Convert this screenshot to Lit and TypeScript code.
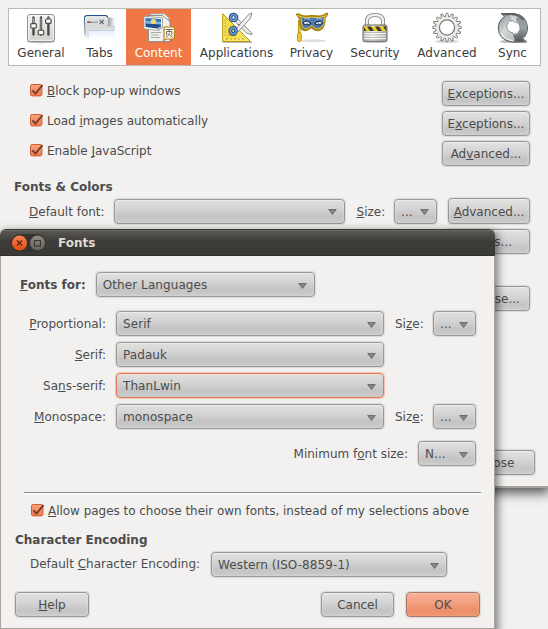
import { LitElement, html, css, svg, nothing } from "lit";
import { customElement, property } from "lit/decorators.js";
import { classMap } from "lit/directives/class-map.js";

/** Splits a label such as "Si_ze:" into text with an underlined access key. */
function mnemonic(label: string) {
  const i = label.indexOf("_");
  if (i < 0) return html`${label}`;
  return html`${label.slice(0, i)}<span class="key">${label[i + 1]}</span>${label.slice(i + 2)}`;
}

const keyStyle = css`
  .key {
    text-decoration: underline;
    text-decoration-thickness: 1px;
    text-underline-offset: 1px;
    text-decoration-skip-ink: none;
  }
`;

@customElement("ui-label")
class UiLabel extends LitElement {
  @property() text = "";
  static styles = [keyStyle, css`:host { display: block; white-space: pre; line-height: 15px; padding-top: 2px; }`];
  render() { return mnemonic(this.text); }
}

@customElement("ui-button")
class UiButton extends LitElement {
  @property() text = "";
  @property({ type: Boolean }) primary = false;
  static styles = [keyStyle, css`
    :host { display: block; flex: none; height: 25px; }
    .face {
      box-sizing: border-box; width: 100%; height: 100%; padding-top: 2px;
      display: flex; align-items: center; justify-content: center;
      border: 1px solid #999896; border-radius: 4px; white-space: pre;
      background: linear-gradient(#e2e2e1, #d3d3d3 45%, #c5c5c5 75%, #cacaca);
      box-shadow: inset 0 1px 0 #ececec, inset 0 0 3px rgba(255,255,255,.4), 0 0 1px 0.5px rgba(0,0,0,.1);
    }
    .primary {
      border-color: #a4796a;
      background: linear-gradient(#f9b196, #f39e7e 45%, #ec8e69 75%, #ef9572);
      box-shadow: inset 0 1px 0 #fbbda5, inset 0 0 3px rgba(255,190,160,.5), 0 0 1px 0.5px rgba(0,0,0,.1);
    }
    .text { line-height: 15px; }
  `];
  render() {
    return html`<div class=${classMap({ face: true, primary: this.primary })}><span class="text">${mnemonic(this.text)}</span></div>`;
  }
}

@customElement("ui-select")
class UiSelect extends LitElement {
  @property() value = "";
  @property({ type: Boolean }) focused = false;
  static styles = css`
    :host { display: block; flex: none; height: 25px; }
    .face {
      box-sizing: border-box; width: 100%; height: 100%;
      display: flex; align-items: center; justify-content: space-between;
      padding: 2px 7px 0 6px;
      border: 1px solid #999896; border-radius: 4px; white-space: pre;
      background: linear-gradient(#e0e0df, #d3d3d3 40%, #c4c4c4 72%, #cacaca);
      box-shadow: inset 0 1px 0 #ececec, inset 0 0 3px rgba(255,255,255,.4), 0 0 1px 0.5px rgba(0,0,0,.1);
    }
    .focused { border-color: #e27b57; box-shadow: inset 0 1px 0 #f0dfd8, 0 0 0 1px rgba(240,140,105,.45); }
    .text { line-height: 15px; letter-spacing: .08px; }
    .arrow { display: block; width: 9px; height: 6px; }
  `;
  render() {
    return html`<div class=${classMap({ face: true, focused: this.focused })}>
      <span class="text">${this.value}</span>
      <svg class="arrow" viewBox="0 0 9 6"><path d="M.7.5h7.6L4.5 5.5z" fill="#858585" stroke="#686868" stroke-width=".9"/></svg>
    </div>`;
  }
}

@customElement("ui-check")
class UiCheck extends LitElement {
  @property() text = "";
  static styles = [keyStyle, css`
    :host { display: flex; align-items: flex-start; height: 16px; gap: 3px; white-space: pre; line-height: 15px; letter-spacing: -.03px; }
    .box { display: block; flex: none; width: 15px; height: 15px; }
    .text { padding-top: 1px; }
  `];
  render() {
    return html`<svg class="box" viewBox="0 0 15 15">
        <defs><linearGradient id="g" x2="0" y2="1"><stop stop-color="#fba17d"/><stop offset="1" stop-color="#f17a4d"/></linearGradient></defs>
        <rect x="1.5" y="1.5" width="11.4" height="11.4" rx="1.8" fill="url(#g)" stroke="#cc5c33"/>
        <path d="M3.4 7.3l3.1 3.2L13.5 2.2" fill="none" stroke="#703f2e" stroke-width="1.9"/>
      </svg><span class="text">${mnemonic(this.text)}</span>`;
  }
}

const icons: Record<string, unknown> = {
  General: svg`
    <ellipse cx="16" cy="29.6" rx="14" ry="1.6" fill="#bbb"/>
    <rect x="2.5" y="2.5" width="27" height="27" rx="2.5" fill="url(#plate)" stroke="#92928c"/>
    <rect x="3.7" y="3.7" width="24.6" height="24.6" rx="1.5" fill="none" stroke="#f7f7f5"/>
    <g stroke="#4a4c4a" stroke-width="2.4" stroke-linecap="round"><path d="M8.5 5.5v17M16 5.5v17M23.4 5.5v17"/></g>
    <g stroke="#c9c9c5" stroke-width=".7"><path d="M8.5 6v7M16 6v13M23.4 6v3"/></g>
    <g fill="#fafafa" stroke="#454745" stroke-width="1.1">
      <rect x="5.8" y="11.6" width="5.5" height="4.4" rx="1"/><rect x="13.2" y="18.3" width="5.5" height="4.4" rx="1"/><rect x="20.6" y="7" width="5.5" height="4.4" rx="1"/></g>`,
  Tabs: svg`
    <path d="M0 27V5.5Q0 3.4 2.5 3.4H22l2 2.2V14h7v13z" fill="url(#fade)"/>
    <path d="M23.5 5.5H31v9h-7z" fill="url(#side)"/>
    <path d="M.6 24V6Q.6 3.7 3 3.7H21.5q2 0 2 2" fill="none" stroke="url(#tabEdge)" stroke-width="1.4"/>
    <path d="M1.500 24V6q0-1.200 1.600-1.200h18.500q1.300 0 1.300 1.400v8.300H31" fill="none" stroke="url(#line)"/>
    <path d="M4 18h27v9H4z" fill="url(#page)"/><path d="M4 26v-7.500h26" fill="none" stroke="#a9bbd4" stroke-opacity=".6"/>
    <path d="M3.200 10.200h2" stroke="#c62828" stroke-width="1.400"/><path d="M5.200 10.200h1.500" stroke="#204a87" stroke-width="1.400"/>
    <path d="M7 10.200h7" stroke="#888a88"/><path d="M15.700 8l4 4M19.700 8l-4 4" stroke="#666" stroke-width="1.100"/>`,
  Content: svg`
    <path d="M5 27.500h24l-1 3H5z" fill="#a6694c" opacity=".5"/>
    <path d="M7.500 1.800h14l4.500 4.500v19H7.500z" fill="#f8f8f5" stroke="#a3a39d"/>
    <path d="M5.500 3.500h14l7.500 6V29.500h-21.500z" fill="#f1f1ed" stroke="#92928c"/>
    <path d="M8 20.500h10M8 23h8M8 25.500h9M21 15h4M20 17.500h4" stroke="#a8a8a3"/>
    <path d="M1 4.500l18.500 1.200V15l-4 3.500L1 16.800z" fill="#fff" stroke="#93938e" stroke-width=".8"/>
    <path d="M2.500 6l15.500 1v6L2.500 12z" fill="#3874c0"/><path d="M2.500 9l15.500 1v3L2.500 12z" fill="#87b4e2"/>
    <circle cx="10.500" cy="9.700" r="2.700" fill="#f2dc68"/><path d="M2.500 11.500l15.500.9-.3 3.300-2 1.100L2.500 15z" fill="#204e8c"/>
    <path d="M19.500 15l-4 3.500v-3.300z" fill="#ddd" stroke="#888" stroke-width=".6"/>
    <path d="M22.500 15h7.500q1.500 0 1.500 1.500v9q0 1.500-1.500 1.500h-6.500l-2.500 1.500V16.500q0-1.500 1.500-1.500z" fill="#fdf8e6" stroke="#b98021" stroke-width="1.200"/>
    <g fill="none" stroke="#4b4a43" stroke-width=".8"><path d="M22.600 17.500h7.400M26.200 17.500v2M23.600 23.200v-3.700h5.200v3.700M26.200 20.800v2l-3.200 2.600M26.800 23.200l2.800 2.200"/></g>`,
  Applications: svg`
    <path d="M1.500 30.300H31" stroke="#bbb" stroke-width="1.500"/>
    <path d="M1.700 1.700L29.500 29.500H1.700zM8 16.500v6.700h6.800z" fill="url(#gold)" fill-rule="evenodd" stroke="#ba960c"/>
    <path d="M3.200 5.500v22.500M5 28h20" stroke="#fff5a5" stroke-width=".9"/>
    <path d="M3 8h2M3 11h1.500M3 14h2M3 17h1.500M3 20h2M3 23h1.500M6 28v-2M10 28v-1.500M14 28v-2M18 28v-1.500M22 28v-2" stroke="#967c0b" stroke-width=".7"/>
    <path d="M14 9.500l3-2.300 14 14v1.300l-5.300-1.200z" fill="#e9e9e6" stroke="#7c7e7a" stroke-width=".9"/>
    <path d="M14 18l13.700-15.500q1.700-1.500 3.300-1.300l-2 5.500L17 20z" fill="#f1f1ef" stroke="#7c7e7a" stroke-width=".9"/>
    <circle cx="12.500" cy="5.500" r="3" fill="none" stroke="#204a87" stroke-width="3.600"/><circle cx="12.500" cy="5.500" r="3" fill="none" stroke="#6f9bd1" stroke-width="1.700"/>
    <ellipse cx="12.200" cy="18.800" rx="2.800" ry="3.200" fill="none" stroke="#204a87" stroke-width="3.600"/><ellipse cx="12.200" cy="18.800" rx="2.800" ry="3.200" fill="none" stroke="#6f9bd1" stroke-width="1.700"/>
    <circle cx="18" cy="12.500" r=".8" fill="#666"/>`,
  Privacy: svg`
    <ellipse cx="17" cy="28.800" rx="13" ry="1.500" fill="#ddd"/>
    <path d="M3.200 8v14" stroke="#a98500" stroke-width="2.500"/><path d="M3.200 8v14" stroke="#f3d749"/>
    <rect x="1.600" y="20.500" width="3.600" height="9" rx="1.600" fill="#edcf33" stroke="#b08b00" stroke-width=".9"/>
    <path d="M1 2.500q2-1 3.500.8 5 2 10.500.7h2.500q6 1.300 10.500-.7 1.500-1.500 3-1.500-.3 2-2.200 4.200 0 9-4.300 11.500-5 2.500-8.500-2h-1.500q-3.500 4.500-8 2Q4 15.500 4 7 2.500 4.500 1 2.500z" fill="#496e9c" stroke="#a88000" stroke-width="1.900"/>
    <path d="M2.300 3.500q1.200-.2 2 1 5.500 2 11 .7h2q5.500 1.300 11-.9l1.600-1.500-1.700 3.300q.2 8.300-4 10.200-4.300 1.900-7.500-2.300h-2q-3.600 4.200-7.300 2Q5.200 14 5.300 6.500z" fill="#527cae" stroke="#f3d646" stroke-width=".9"/>
    <path d="M6.500 11q4-4 8.300.5-4.200 3-8.300-.5M18.800 11.500q4-4 8.200-.5-4.200 3.500-8.200.5z" fill="#fff" stroke="#223e63" stroke-width="1.100"/>
    <circle cx="11" cy="11.200" r=".8" fill="#527cae"/><circle cx="22.600" cy="11.200" r=".8" fill="#527cae"/>
    <path d="M8 7q3-1.500 6 0M20 7q3-1.500 6 0" stroke="#9bb9db" fill="none"/>`,
  Security: svg`
    <ellipse cx="16" cy="29.500" rx="13" ry="1.300" fill="#bbb"/>
    <path d="M8 14.500V9Q8 3 16 3t8 6v5.500" fill="none" stroke="#81837e" stroke-width="4"/>
    <path d="M8 14.500V9Q8 3 16 3t8 6v5.500" fill="none" stroke="#efefec" stroke-width="2.300"/>
    <rect x="4" y="13" width="24" height="16.300" rx="1.700" fill="url(#metal)" stroke="#656660"/>
    <path d="M5 14.500h22v4.500H5z" fill="#efcd25"/><path d="M8 14.500h4l3 4.500h-4zM16 14.500h4l3 4.500h-4zM24 14.500h3v4.500zM5 15l2.500 4H5z" fill="#3b3a31"/>
    <path d="M5 20.500h22M5 23h22M5 25.500h22M5 28h22" stroke="#a3a5a0" stroke-width=".7"/><path d="M5 21.500h22M5 24h22M5 26.500h22" stroke="#fff" stroke-width=".8"/>`,
  Advanced: svg`
    <ellipse cx="16" cy="29.500" rx="12" ry="1.600" fill="#d9d9d7"/>
    <circle cx="16" cy="15.500" r="11.200" fill="none" stroke="#777974"/>
    ${Array.from({ length: 16 }, (_, i) => svg`<path d="M14.200 5.200L15.200 1.200h1.600l1 4" transform="rotate(${i * 22.5} 16 15.500)" fill="#ecece9" stroke="#777974" stroke-width=".9"/>`)}
    <circle cx="16" cy="15.500" r="9.300" fill="#fff" stroke="#ecece9" stroke-width="3"/>
    <circle cx="16" cy="15.500" r="7.600" fill="#fff" stroke="#777974" stroke-width="1.300"/>`,
  Sync: svg`
    <ellipse cx="16" cy="29.500" rx="13" ry="1.600" fill="#bbb"/>
    <path d="M4 1.500H17Q29.500 3 30.500 15q.3 7-4.500 11.500L29.500 30H15Q1.500 28 1.300 16 1.300 9 7.500 4.500z" fill="url(#arrowLight)" stroke="#565c5e"/>
    <path d="M20 2.500Q30 5 30 15.500q0 6.500-5 11l3 2.900H17l-1.500-5.900q7-.5 7.700-8Q23 10.500 19 8.500z" fill="url(#arrowDark)"/>
    <path d="M6.500 2.300h9.500q7 .7 10.500 5.500" fill="none" stroke="#596164" stroke-width="1.800"/>
    <path d="M4.500 21.500Q7.500 27.500 16 28.700" fill="none" stroke="#eef0f0" stroke-width="1.200"/>
    <path d="M11.500 10.500l1-3 1.800 2 1-1.500 1.500 1.800 5 1.500 1 3 .2 4-1.500 1-1.200 3.300-1.900-1.500-1.700 2-1-2.400q-5.500-.8-6-5.500.1-2.800 1.800-4.700z" fill="#fff" stroke="#727a7d" stroke-width=".8"/>
    <path d="M14 3l3 5.500 2 1.800M17.500 28.500l-2-5-2-1.500" fill="none" stroke="#dfe2e3"/>`,
};

@customElement("pane-tab")
class PaneTab extends LitElement {
  @property() name = "";
  @property({ type: Boolean }) selected = false;
  static styles = css`
    :host { display: block; flex: none; }
    .tab { box-sizing: border-box; height: 100%; padding-top: 3px; display: flex; flex-direction: column; align-items: center; color: #3c3c3c; }
    .selected { background: #f07746; color: #fff; }
    .icon { display: block; width: 32px; height: 32px; }
    .name { line-height: 15px; margin-top: 2px; }
  `;
  render() {
    return html`<div class=${classMap({ tab: true, selected: this.selected })}>
      <svg class="icon" viewBox="0 0 32 32">
        <defs>
          <linearGradient id="plate" x2="0" y2="1"><stop stop-color="#f4f4f2"/><stop offset="1" stop-color="#cfcfcb"/></linearGradient>
          <linearGradient id="fade" x2="0" y2="1"><stop stop-color="#e4e4e2"/><stop offset=".5" stop-color="#d6d8da"/><stop offset="1" stop-color="#fff"/></linearGradient>
          <linearGradient id="side"><stop stop-color="#93979b"/><stop offset="1" stop-color="#fff"/></linearGradient>
          <linearGradient id="tabEdge" x2="0" y2="1"><stop stop-color="#245088"/><stop offset=".35" stop-color="#6a7c94"/><stop offset="1" stop-color="#ddd"/></linearGradient>
          <linearGradient id="line" x2="0" y2="1"><stop stop-color="#fff"/><stop offset="1" stop-color="#9a9c9e" stop-opacity=".5"/></linearGradient>
          <linearGradient id="page" x2="0" y2="1"><stop stop-color="#e6eefb"/><stop offset="1" stop-color="#fff"/></linearGradient>
          <linearGradient id="gold"><stop stop-color="#f4d934"/><stop offset="1" stop-color="#f5e675"/></linearGradient>
          <linearGradient id="metal"><stop stop-color="#bdbeba"/><stop offset=".4" stop-color="#f4f4f2"/><stop offset="1" stop-color="#a9aaa6"/></linearGradient>
          <linearGradient id="arrowLight" x2="1" y2="1"><stop stop-color="#7d8487"/><stop offset=".4" stop-color="#d6d9da"/><stop offset="1" stop-color="#9da3a5"/></linearGradient>
          <linearGradient id="arrowDark" x2="0" y2="1"><stop stop-color="#8b9295"/><stop offset=".5" stop-color="#9aa1a3"/><stop offset="1" stop-color="#4f5659"/></linearGradient>
        </defs>
        ${icons[this.name] ?? nothing}
      </svg>
      <span class="name">${this.name}</span>
    </div>`;
  }
}

@customElement("preferences-window")
class PreferencesWindow extends LitElement {
  static styles = css`
    :host { display: block; box-sizing: border-box; height: 488px; padding: 8px 0 0 8px; background: #f2f1f0; border-bottom: 2px solid #a6a39c; box-shadow: 0 3px 11px 2px rgba(0,0,0,.65); }
    .toolbar { box-sizing: border-box; width: 533px; height: 58px; display: grid; grid-template-columns: 64px 53px 65px 91px 59px 68px 76px 55px; border: 1px solid #bbb9b5; background: #fff; }
    .body { width: 522px; padding-top: 15px; display: flex; flex-direction: column; }
    .option { display: flex; justify-content: space-between; height: 30px; padding-left: 21px; }
    .option ui-check { margin-top: 2px; }
    .wide { width: 88px; }
    .heading { margin: 9px 0 0 6px; font-weight: bold; line-height: 15px; }
    .fonts { display: flex; align-items: center; margin-top: 3px; padding-left: 21px; height: 26px; }
    .family { width: 231px; margin-left: 9px; }
    .size-label { margin-left: 12px; }
    .size { width: 43px; margin: 0 11px 0 auto; }
    .side { width: 82px; }
    .tall { height: 26px; }
    .end { align-self: flex-end; margin-top: 5px; }
    .colors { width: 85px; }
    .far { width: 76px; margin-top: 32px; }
    .close { width: 74px; margin: 139px -5px 0 0; align-self: flex-end; }
  `;
  render() {
    return html`
      <div class="toolbar">
        ${Object.keys(icons).map((n) => html`<pane-tab name=${n} ?selected=${n === "Content"}></pane-tab>`)}
      </div>
      <div class="body">
        <div class="option"><ui-check text="_Block pop-up windows"></ui-check><ui-button class="wide" text="_Exceptions..."></ui-button></div>
        <div class="option"><ui-check text="Load _images automatically"></ui-check><ui-button class="wide" text="E_xceptions..."></ui-button></div>
        <div class="option"><ui-check text="Enable _JavaScript"></ui-check><ui-button class="wide" text="Ad_vanced..."></ui-button></div>
        <div class="heading">Fonts &amp; Colors</div>
        <div class="fonts">
          <ui-label text="_Default font:"></ui-label><ui-select class="family"></ui-select>
          <ui-label class="size-label" text="_Size:"></ui-label><ui-select class="size" value="..."></ui-select>
          <ui-button class="side tall" text="_Advanced..."></ui-button>
        </div>
        <ui-button class="end colors" text="_Colors..."></ui-button>
        <ui-button class="end far" text="Ch_oose..."></ui-button>
        <ui-button class="close" text="_Close"></ui-button>
      </div>`;
  }
}

@customElement("fonts-dialog")
class FontsDialog extends LitElement {
  static styles = css`
    :host { display: flex; flex-direction: column; box-sizing: border-box; width: 495px; height: 400px; border-radius: 6px 6px 0 0; background: #f2f1f0; box-shadow: 1px 4px 9px 2px rgba(0,0,0,.5); overflow: hidden; }
    .title { flex: none; box-sizing: border-box; height: 27px; padding-left: 11px; display: flex; align-items: center; background: linear-gradient(#5b5a54, #3d3c38 45%, #3a3935); border-top: 1px solid #393834; border-bottom: 1px solid #302f2c; box-shadow: inset 0 1px 0 #6b6963; color: #dfdbd2; font-weight: bold; }
    .controls { display: block; width: 36px; height: 20px; margin-right: 11px; }
    .caption { padding-top: 2px; }
    .content { flex: 1; box-sizing: border-box; border: solid #a8a59e; border-width: 0 1px 1px; padding: 16px 13px 0 14px; display: flex; flex-direction: column; }
    .language { display: flex; align-items: center; gap: 10px; padding-left: 5px; font-weight: bold; }
    .language ui-select { width: 219px; font-weight: normal; }
    .grid { display: grid; grid-template-columns: 91px 268px 29px 43px; column-gap: 10px; row-gap: 6px; margin-top: 14px; align-items: center; }
    .grid ui-label:nth-child(4n + 1) { justify-self: end; }
    .grid .size-label { margin-left: 1px; }
    .minimum { display: flex; align-items: center; justify-content: flex-end; gap: 10px; margin: 12px 5px 0 0; }
    .minimum ui-select { width: 58px; }
    .rule { height: 1px; margin: 26px 0 0 9px; background: #8b8986; border-bottom: 1px solid #fff; }
    .allow { margin: 9px 0 0 15px; }
    .heading { margin-top: 14px; font-weight: bold; line-height: 15px; }
    .encoding { display: flex; align-items: center; gap: 11px; margin: 4px 0 0 15px; }
    .encoding ui-select { width: 236px; }
    .encoding ui-label { padding: 0; }
    .actions { display: flex; margin-top: 15px; gap: 12px; }
    .actions ui-button { width: 74px; }
    .actions .help { margin-right: auto; }
    .actions .ok { margin-right: 1px; }
    .actions .cancel { width: 73px; }
  `;
  render() {
    return html`
      <div class="title">
        <svg class="controls" viewBox="0 0 36 20">
          <defs>
            <linearGradient id="red" x2="0" y2="1"><stop stop-color="#fb8054"/><stop offset="1" stop-color="#df4c12"/></linearGradient>
            <linearGradient id="grey" x2="0" y2="1"><stop stop-color="#8e8b82"/><stop offset="1" stop-color="#62605a"/></linearGradient>
          </defs>
          <rect width="35" height="18" x="0" y="1" rx="9" fill="#33322e"/>
          <circle cx="8.500" cy="10" r="7.500" fill="url(#red)"/><circle cx="26.500" cy="10" r="7.500" fill="url(#grey)"/>
          <path d="M6 7.500l5 5M11 7.500l-5 5" stroke="#542515" stroke-width="1.300"/>
          <rect x="23.500" y="7.500" width="6" height="5.500" fill="none" stroke="#373631"/>
        </svg>
        <span class="caption">Fonts</span>
      </div>
      <div class="content">
        <div class="language"><ui-label text="_Fonts for:"></ui-label><ui-select value="Other Languages"></ui-select></div>
        <div class="grid">
          <ui-label text="_Proportional:"></ui-label><ui-select value="Serif"></ui-select><ui-label class="size-label" text="Si_ze:"></ui-label><ui-select value="..."></ui-select>
          <ui-label text="_Serif:"></ui-label><ui-select value="Padauk"></ui-select><span></span><span></span>
          <ui-label text="Sa_ns-serif:"></ui-label><ui-select focused value="ThanLwin"></ui-select><span></span><span></span>
          <ui-label text="_Monospace:"></ui-label><ui-select value="monospace"></ui-select><ui-label class="size-label" text="Siz_e:"></ui-label><ui-select value="..."></ui-select>
        </div>
        <div class="minimum"><ui-label text="Minimum f_ont size:"></ui-label><ui-select value="N..."></ui-select></div>
        <div class="rule"></div>
        <ui-check class="allow" text="_Allow pages to choose their own fonts, instead of my selections above"></ui-check>
        <div class="heading">Character Encoding</div>
        <div class="encoding"><ui-label text="Default _Character Encoding:"></ui-label><ui-select value="Western (ISO-8859-1)"></ui-select></div>
        <div class="actions">
          <ui-button class="help" text="_Help"></ui-button><ui-button class="cancel" text="Cancel"></ui-button><ui-button class="ok" primary text="OK"></ui-button>
        </div>
      </div>`;
  }
}

@customElement("app-root")
class AppRoot extends LitElement {
  static styles = css`
    :host { display: block; position: relative; height: 629px; overflow: hidden; background: #f2f1f0; color: #4c4c4c; font: 12px/15px "DejaVu Sans", sans-serif; }
    .dialog { position: absolute; left: 0; top: 229px; }
  `;
  render() {
    return html`<preferences-window></preferences-window><fonts-dialog class="dialog"></fonts-dialog>`;
  }
}
